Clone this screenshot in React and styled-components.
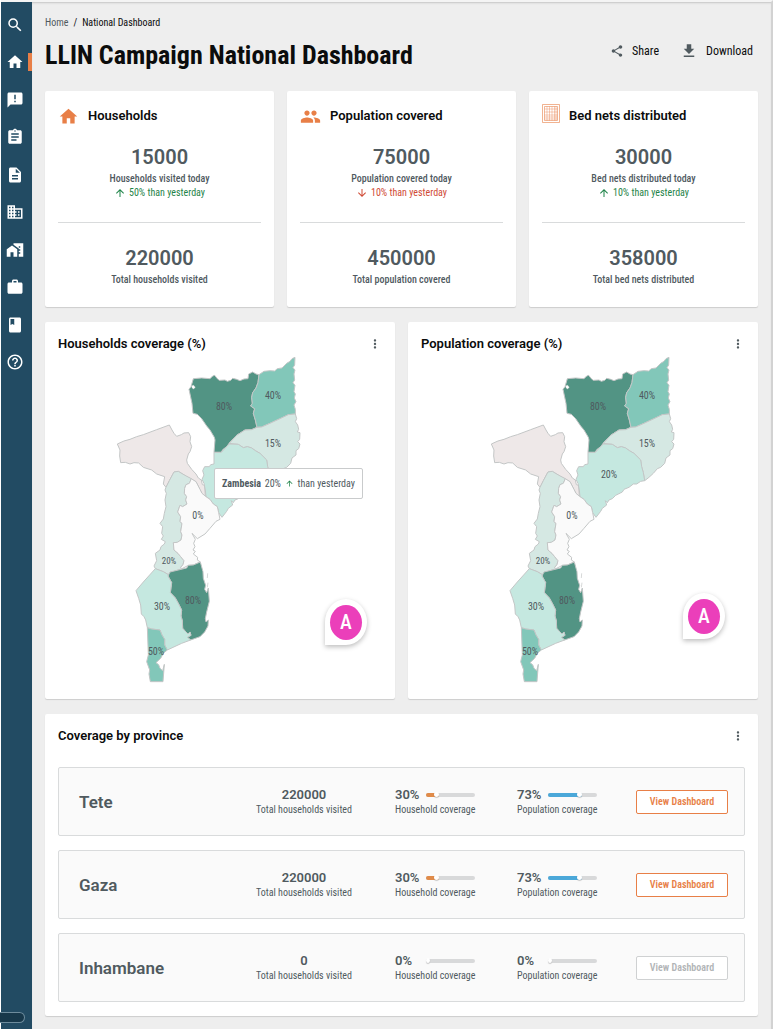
import React from 'react';
import styled, { createGlobalStyle } from 'styled-components';
import {
  MdSearch, MdHome, MdAnnouncement, MdAssignment, MdDescription, MdDomain, MdHomeWork,
  MdWork, MdClass, MdHelpOutline, MdShare, MdFileDownload, MdPeople, MdMoreVert,
  MdArrowUpward, MdArrowDownward,
} from 'react-icons/md';

const c = {
  navy: '#224b63',
  page: '#eeeeee',
  ink: '#0b0c0c',
  grey: '#505a5f',
  line: '#d9dbdc',
  orange: '#e87f47',
  green: '#1f8449',
  red: '#d04a35',
};

const condensed = '"Roboto Condensed", "Liberation Sans Narrow", Roboto, sans-serif';
const regular = 'Roboto, "Liberation Sans", sans-serif';

const GlobalStyle = createGlobalStyle`
  * { box-sizing: border-box; }
  body { margin: 0; background: #fff; font-family: ${condensed}; color: ${c.grey}; font-size: 10px; line-height: 14px; }
  h1, h2, h3, p, ul, ol { margin: 0; padding: 0; }
  ul, ol { list-style: none; }
  button { font: inherit; color: inherit; background: none; border: 0; padding: 0; cursor: pointer; }
  svg { display: block; flex: none; }
`;

const Shell = styled.div`
  display: flex;
  min-height: calc(100vh - 1px);
  margin: 0 3px 1px 1px;
  border-top: 2px solid #f4f4f4;
  border-right: 2px solid #d2d2d2;
`;

const Sidebar = styled.nav`
  display: flex;
  flex-direction: column;
  justify-content: space-between;
  flex: 0 0 31px;
  background: ${c.navy};
  color: #fff;
`;

const NavList = styled.ul`
  display: flex;
  flex-direction: column;
  padding-top: 4px;
`;

const NavItem = styled.li`
  display: flex;
  height: 38px;
  align-items: center;
  margin-bottom: ${(p) => (p.$tight ? '0' : '-1px')};
`;

const NavLink = styled.a`
  display: flex;
  flex: 1;
  height: 18px;
  align-items: center;
  padding-left: 5px;
  color: #fff;
  border-right: ${(p) => (p.$active ? `4px solid ${c.orange}` : '0')};
`;

const ScrollPill = styled.div`
  width: 25px;
  height: 11px;
  margin: 0 0 6px -1px;
  border: 1px solid #6d8b9c;
  border-left: 0;
  border-radius: 0 6px 6px 0;
  background: #17384b;
`;

const Main = styled.main`
  flex: 1;
  min-width: 0;
  display: flex;
  flex-direction: column;
  gap: 15px;
  padding: 14px 13px 13px;
  background: ${c.page};
  box-shadow: inset 0 2px 2px -1px #c4c4c4;
`;

const PageHead = styled.header`
  padding-bottom: 4px;
`;

const Crumbs = styled.ol`
  display: flex;
  gap: 5px;
  color: ${c.ink};
`;

const CrumbLink = styled.a`
  color: ${c.grey};
  text-decoration: none;
`;

const TitleRow = styled.div`
  display: flex;
  align-items: center;
  justify-content: space-between;
  margin-top: 9px;
`;

const Title = styled.h1`
  font-size: 26px;
  line-height: 33px;
  font-weight: 700;
  color: ${c.ink};
`;

const Actions = styled.div`
  display: flex;
  gap: 21px;
  padding: 0 5px 9px 0;
`;

const Action = styled.button`
  display: flex;
  align-items: center;
  gap: 8px;
  font-size: 12px;
  color: ${c.ink};
  svg { color: ${c.grey}; }
`;

const Card = styled.section`
  position: relative;
  background: #fff;
  border-radius: 2px;
  box-shadow: 0 1px 1px rgba(0, 0, 0, 0.14);
`;

const StatGrid = styled.div`
  display: grid;
  grid-template-columns: repeat(3, minmax(0, 1fr));
  gap: 13px;
`;

const StatCard = styled(Card)`
  padding: 13px 13px 20px;
  text-align: center;
`;

const StatHead = styled.div`
  display: flex;
  align-items: center;
  gap: 9px;
  height: 24px;
  margin-bottom: 17px;
  color: ${c.orange};
`;

const CardTitle = styled.h2`
  font-family: ${regular};
  font-size: 13px;
  line-height: 22px;
  font-weight: 600;
  color: ${c.ink};
`;

const Figure = styled.p`
  font-family: ${regular};
  font-size: 20px;
  line-height: 24px;
  font-weight: 600;
  margin-bottom: 3px;
`;

const FigureLabel = styled.p`
  font-weight: 500;
`;

const Trend = styled.p`
  display: flex;
  align-items: center;
  justify-content: center;
  gap: 3px;
  color: ${(p) => (p.$down ? c.red : c.green)};
`;

const Divider = styled.hr`
  margin: 22px 0 23px;
  border: 0;
  border-top: 1px solid ${c.line};
`;

const MapGrid = styled.div`
  display: grid;
  grid-template-columns: repeat(2, minmax(0, 1fr));
  gap: 13px;
`;

const Panel = styled(Card)`
  padding: 11px 13px 14px;
`;

const PanelHead = styled.div`
  display: flex;
  align-items: center;
  justify-content: space-between;
`;

const MapArea = styled.div`
  display: flex;
  justify-content: center;
  padding-right: ${(p) => (p.$shift ? '24px' : '2px')};
`;

const MapLabel = styled.text`
  font-size: ${(p) => (p.$small ? '9px' : '10px')};
  fill: ${c.grey};
  text-anchor: middle;
`;

const Tooltip = styled.div`
  position: absolute;
  left: 169px;
  top: 146px;
  height: 31px;
  width: 149px;
  display: flex;
  align-items: center;
  justify-content: space-between;
  padding: 0 7px;
  background: #fff;
  border: 1px solid #c9cbcc;
  border-radius: 2px;
  white-space: nowrap;
  svg { color: ${c.green}; }
`;

const Pin = styled.button`
  position: absolute;
  right: ${(p) => p.$right}px;
  bottom: ${(p) => p.$bottom}px;
  width: 42px;
  height: 46px;
  display: flex;
  align-items: center;
  justify-content: center;
  background: #fff;
  border-radius: 50% 50% 50% 0;
  box-shadow: 0 2px 5px rgba(0, 0, 0, 0.26);
`;

const PinFace = styled.span`
  width: 32px;
  height: 35px;
  border-radius: 50%;
  background: #eb3fba;
  color: #fff;
  font-size: 20px;
  line-height: 35px;
  font-weight: 500;
`;

const Rows = styled.ul`
  display: flex;
  flex-direction: column;
  gap: 14px;
  margin-top: 20px;
`;

const Row = styled.li`
  display: grid;
  grid-template-columns: minmax(0, 1fr) 182px 122px 119px 92px;
  align-items: center;
  height: 69px;
  padding: 0 16px 0 20px;
  background: #fafafa;
  border: 1px solid ${c.line};
  border-radius: 2px;
`;

const Province = styled.h3`
  font-family: ${regular};
  font-size: 17px;
  line-height: 24px;
  font-weight: 600;
`;

const Visits = styled.div`
  text-align: center;
`;

const Metric = styled.p`
  font-family: ${regular};
  font-size: 13px;
  line-height: 17px;
  font-weight: 600;
`;

const Coverage = styled.div`
  display: flex;
  align-items: center;
  ${Metric} { width: 31px; }
`;

const Track = styled.div`
  width: 49px;
  height: 4px;
  border-radius: 2px;
  background: #d8d9da;
`;

const Fill = styled.div`
  display: flex;
  align-items: center;
  justify-content: flex-end;
  height: 4px;
  min-width: 4px;
  border-radius: 2px;
  background: ${(p) => p.$color};
  &::after {
    content: '';
    width: 5px;
    height: 5px;
    border-radius: 50%;
    background: #fff;
    box-shadow: 0 1px 1px rgba(0, 0, 0, 0.2);
  }
`;

const ViewButton = styled.button`
  height: 24px;
  border: 1px solid ${c.orange};
  border-radius: 2px;
  background: #fff;
  color: ${c.orange};
  font-weight: 600;
  &:disabled { color: #b1b4b6; border-color: #cfd1d2; cursor: default; }
`;

function NetIcon() {
  return (
    <svg width="18" height="24" viewBox="0 0 18 24" fill="none" stroke="#e87f47" aria-hidden="true">
      <path d="M.5 .5H17.5V18.5H.5Z" strokeWidth=".8" opacity=".75" />
      <path d="M2.5 2.5H15.5V16.5H2.5Z" strokeWidth=".8" opacity=".7" />
      <path d="M5 2.5V16.5M7.5 2.5V16.5M10 2.5V16.5M12.5 2.5V16.5M14 2.5V16.5M2.5 5H15.5M2.5 8H15.5M2.5 11H15.5M2.5 13H15.5M2.5 15H15.5" strokeWidth=".6" opacity=".65" />
    </svg>
  );
}

const regions = [
  { name: 'Tete', fill: '#eee8e8', d: 'M22 282 L42 273 L60 268 L80 260 L100 254 L140 239 L178 225 L186 240 L192 250 L200 259 L214 254 L222 249 L236 248 L242 260 L240 275 L245 290 L240 305 L235 312 L230 330 L232 340 L245 358 L258 372 L265 384 L274 390 L277 404 L284 406 L286 440 L276 430 L270 418 L258 395 L240 386 L205 364 L192 366 L178 392 L168 412 L160 402 L164 380 L140 372 L125 360 L100 352 L86 339 L72 338 L60 342 L46 337 L32 338 L29 318 L30 300Z' },
  { name: 'Niassa', fill: '#529484', d: 'M250 86 L275 84 L300 86 L308 78 L314 76 L322 86 L328 91 L345 90 L352 94 L362 91 L368 85 L380 88 L390 92 L402 87 L414 86 L416 72 L428 66 L438 72 L447 74 L444 98 L438 114 L428 128 L425 142 L427 160 L422 168 L434 176 L430 190 L436 210 L441 232 L425 239 L405 240 L380 256 L362 274 L350 290 L338 299 L334 307 L312 307 L315 270 L313 262 L300 240 L290 228 L275 206 L262 193 L249 190 L246 160 L237 118 L243 110Z' },
  { name: 'Cabo Delgado', fill: '#82c7b9', d: 'M447 74 L462 64 L480 62 L494 63 L502 56 L516 54 L530 40 L540 34 L546 26 L555 22 L554 45 L549 53 L555 60 L552 72 L554 90 L549 98 L555 106 L552 125 L556 132 L553 144 L558 155 L552 165 L556 178 L556 192 L535 194 L510 206 L480 220 L455 231 L441 232 L436 210 L430 190 L434 176 L422 168 L427 160 L425 142 L428 128 L438 114 L444 98Z' },
  { name: 'Nampula', fill: '#d5e8e3', d: 'M441 232 L455 231 L480 220 L510 206 L535 194 L556 192 L560 206 L556 215 L563 225 L566 238 L562 246 L570 248 L569 268 L563 275 L570 282 L566 296 L558 302 L558 315 L546 324 L542 340 L530 352 L520 356 L508 370 L495 382 L482 392 L478 368 L473 350 L470 330 L450 310 L436 302 L425 294 L412 290 L400 293 L385 283 L358 280 L380 256 L405 240 L425 239Z' },
  { name: 'Zambezia', fill: '#c5e8e0', d: 'M334 307 L350 290 L358 282 L385 283 L400 293 L412 290 L425 294 L436 302 L450 310 L470 330 L473 350 L478 368 L482 392 L470 394 L458 402 L448 402 L435 412 L420 418 L415 426 L395 436 L385 446 L375 450 L370 458 L364 452 L368 465 L355 475 L350 484 L336 502 L326 488 L322 470 L310 462 L300 448 L288 440 L286 420 L282 400 L276 388 L282 375 L278 362 L284 350 L298 350 L302 344 L312 342 L312 307Z' },
  { name: 'Manica', fill: '#d5e8e3', d: 'M192 366 L205 364 L213 369 L225 376 L244 386 L238 400 L228 404 L224 415 L223 430 L230 440 L227 450 L231 462 L218 470 L210 466 L203 486 L212 500 L210 515 L216 520 L212 545 L216 555 L213 570 L202 577 L190 578 L192 600 L204 610 L212 620 L222 632 L219 644 L212 652 L216 656 L180 668 L175 674 L160 665 L136 656 L132 648 L140 632 L136 610 L150 600 L153 590 L163 582 L166 575 L154 568 L160 558 L155 550 L158 530 L150 520 L160 507 L163 490 L168 470 L165 450 L169 430 L165 420 L168 412 L178 392Z' },
  { name: 'Sofala', fill: '#fafafa', d: 'M244 386 L258 395 L270 418 L276 430 L288 440 L300 448 L310 462 L322 470 L326 488 L330 508 L318 514 L300 535 L285 552 L262 566 L246 550 L256 568 L251 580 L255 590 L249 600 L256 604 L250 612 L263 622 L262 630 L271 636 L250 645 L235 646 L216 656 L212 652 L219 644 L222 632 L212 620 L204 610 L192 600 L190 578 L202 577 L213 570 L216 555 L212 545 L216 520 L210 515 L212 500 L203 486 L210 466 L218 470 L231 462 L227 450 L230 440 L223 430 L224 415 L228 404 L238 400Z' },
  { name: 'Inhambane', fill: '#529484', d: 'M271 636 L250 645 L235 646 L230 654 L180 666 L174 678 L185 698 L181 728 L196 744 L206 762 L215 780 L213 798 L217 812 L218 835 L226 844 L234 852 L240 846 L243 856 L232 862 L242 870 L270 860 L284 846 L294 828 L295 810 L288 816 L286 806 L290 786 L298 754 L295 714 L290 728 L284 718 L287 706 L280 685 L279 665Z' },
  { name: 'Gaza', fill: '#c5e8e0', d: 'M136 656 L160 665 L175 674 L174 678 L185 698 L181 728 L196 744 L206 762 L215 780 L213 798 L217 812 L218 835 L226 844 L234 852 L240 846 L243 856 L232 862 L242 870 L215 880 L172 900 L164 885 L164 868 L156 855 L150 840 L125 837 L112 833 L107 810 L102 800 L94 792 L92 765 L86 745 L78 722 L100 696Z' },
  { name: 'Maputo', fill: '#82c7b9', d: 'M112 833 L125 837 L150 840 L156 855 L164 868 L164 885 L172 900 L160 910 L152 925 L138 938 L146 944 L150 955 L158 962 L163 943 L159 995 L121 995 L117 972 L119 960 L110 935 L115 915Z' },
];

const mapLabels = [
  { region: 'Niassa', text: '80%', x: 109, y: 55 },
  { region: 'Cabo Delgado', text: '40%', x: 158, y: 44 },
  { region: 'Nampula', text: '15%', x: 158, y: 92 },
  { region: 'Zambezia', text: '20%', x: 120, y: 123 },
  { region: 'Sofala', text: '0%', x: 83, y: 164 },
  { region: 'Manica', text: '20%', x: 54, y: 209, small: true },
  { region: 'Gaza', text: '30%', x: 47, y: 255 },
  { region: 'Inhambane', text: '80%', x: 78, y: 249 },
  { region: 'Maputo', text: '50%', x: 41, y: 300 },
];

// The hovered region shows its value in the tooltip instead of on the map.
function ProvinceMap({ label, hovered }) {
  return (
    <svg width="187" height="330" viewBox="0 0 187 330" role="img" aria-label={label}>
      <g transform="scale(.33333) translate(-15 -15)" stroke="#c3c6c6" strokeWidth="3" strokeLinejoin="round">
        {regions.map((r) => <path key={r.name} d={r.d} fill={r.fill} />)}
        <path d="M245 108 L250 105 L256 112 L251 117 L246 114Z" fill="#fff" strokeWidth="1" />
        <path d="M293 670 L292 684 M294 698 L292 712" strokeWidth="2" />
      </g>
      {mapLabels.filter((m) => m.region !== hovered).map((m) => (
        <MapLabel key={m.region} x={m.x} y={m.y} $small={m.small}>{m.text}</MapLabel>
      ))}
    </svg>
  );
}

const navItems = [
  ['Search', MdSearch], ['Home', MdHome], ['Complaints', MdAnnouncement], ['Tasks', MdAssignment],
  ['Documents', MdDescription], ['Buildings', MdDomain], ['Housing', MdHomeWork], ['Work', MdWork],
  ['Register', MdClass], ['Help', MdHelpOutline],
];

const stats = [
  { title: 'Households', icon: <MdHome size={21} />, today: '15000', todayLabel: 'Households visited today', trend: '50% than yesterday', total: '220000', totalLabel: 'Total households visited' },
  { title: 'Population covered', icon: <MdPeople size={21} />, today: '75000', todayLabel: 'Population covered today', trend: '10% than yesterday', down: true, total: '450000', totalLabel: 'Total population covered' },
  { title: 'Bed nets distributed', icon: <NetIcon />, today: '30000', todayLabel: 'Bed nets distributed today', trend: '10% than yesterday', total: '358000', totalLabel: 'Total bed nets distributed' },
];

const provinces = [
  { name: 'Tete', visits: '220000', house: 30, houseFill: 26, pop: 73, popFill: 70 },
  { name: 'Gaza', visits: '220000', house: 30, houseFill: 26, pop: 73, popFill: 70 },
  { name: 'Inhambane', visits: '0', house: 0, houseFill: 0, pop: 0, popFill: 0 },
];

function CoverageCell({ value, fill, color, label }) {
  return (
    <div>
      <Coverage>
        <Metric>{value}%</Metric>
        <Track role="progressbar" aria-label={label} aria-valuenow={value} aria-valuemin={0} aria-valuemax={100}>
          <Fill $color={value ? color : 'transparent'} style={{ width: `${fill}%` }} />
        </Track>
      </Coverage>
      <p>{label}</p>
    </div>
  );
}

function MenuButton({ label }) {
  return <button type="button" aria-label={label}><MdMoreVert size={14} /></button>;
}

export default function App() {
  return (
    <>
      <GlobalStyle />
      <Shell>
        <Sidebar aria-label="Main">
          <NavList>
            {navItems.map(([label, Icon], i) => (
              <NavItem key={label} $tight={i % 2 === 1}>
                <NavLink href="#" aria-label={label} $active={label === 'Home'}><Icon size={18} /></NavLink>
              </NavItem>
            ))}
          </NavList>
          <ScrollPill />
        </Sidebar>
        <Main>
          <PageHead>
            <Crumbs>
              <li><CrumbLink href="#">Home</CrumbLink></li>
              <li aria-hidden="true">/</li>
              <li>National Dashboard</li>
            </Crumbs>
            <TitleRow>
              <Title>LLIN Campaign National Dashboard</Title>
              <Actions>
                <Action type="button"><MdShare size={14} />Share</Action>
                <Action type="button"><MdFileDownload size={18} />Download</Action>
              </Actions>
            </TitleRow>
          </PageHead>
          <StatGrid>
            {stats.map((s) => (
              <StatCard key={s.title}>
                <StatHead>{s.icon}<CardTitle>{s.title}</CardTitle></StatHead>
                <Figure>{s.today}</Figure>
                <FigureLabel>{s.todayLabel}</FigureLabel>
                <Trend $down={s.down}>
                  {s.down ? <MdArrowDownward size={12} /> : <MdArrowUpward size={12} />}
                  {s.trend}
                </Trend>
                <Divider />
                <Figure>{s.total}</Figure>
                <FigureLabel>{s.totalLabel}</FigureLabel>
              </StatCard>
            ))}
          </StatGrid>
          <MapGrid>
            <Panel>
              <PanelHead><CardTitle>Households coverage (%)</CardTitle><MenuButton label="Households coverage menu" /></PanelHead>
              <MapArea $shift><ProvinceMap label="Households coverage map" hovered="Zambezia" /></MapArea>
              <Tooltip role="tooltip"><b>Zambesia</b><span>20%</span><MdArrowUpward size={9} /><span>than yesterday</span></Tooltip>
              <Pin type="button" $right={28} $bottom={54}><PinFace>A</PinFace></Pin>
            </Panel>
            <Panel>
              <PanelHead><CardTitle>Population coverage (%)</CardTitle><MenuButton label="Population coverage menu" /></PanelHead>
              <MapArea><ProvinceMap label="Population coverage map" /></MapArea>
              <Pin type="button" $right={33} $bottom={60}><PinFace>A</PinFace></Pin>
            </Panel>
          </MapGrid>
          <Panel>
            <PanelHead><CardTitle>Coverage by province</CardTitle><MenuButton label="Coverage by province menu" /></PanelHead>
            <Rows>
              {provinces.map((p) => (
                <Row key={p.name}>
                  <Province>{p.name}</Province>
                  <Visits><Metric>{p.visits}</Metric><p>Total households visited</p></Visits>
                  <CoverageCell value={p.house} fill={p.houseFill} color="#e08b49" label="Household coverage" />
                  <CoverageCell value={p.pop} fill={p.popFill} color="#4ba8d9" label="Population coverage" />
                  <ViewButton type="button" disabled={p.visits === '0'}>View Dashboard</ViewButton>
                </Row>
              ))}
            </Rows>
          </Panel>
        </Main>
      </Shell>
    </>
  );
}
